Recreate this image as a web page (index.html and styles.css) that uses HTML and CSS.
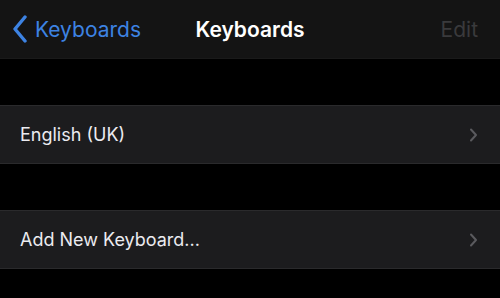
FILE: index.html
```html
<!doctype html>
<html>
    <head>
        <meta charset="UTF-8" />
        <title>Keyboards</title>
        <link rel="stylesheet" href="styles.css">
    </head>
    <body>
        <div class="navbar">
            <div class="nav-back">
                <!-- back chevron -->
                <svg class="back-icon" viewBox="0 0 16 28">
                    <path d="M13 2 L3 14 L13 26" fill="none" stroke="#3d83e3" stroke-width="3.4" stroke-linecap="round" stroke-linejoin="round" />
                </svg>
                <span>Keyboards</span>
            </div>
            <div class="nav-title">Keyboards</div>
            <div class="nav-edit">Edit</div>
        </div>

        <div class="section">
            <div class="cell">
                <span class="cell-label">English (UK)</span>
                <svg class="chevron" viewBox="0 0 9 14">
                    <path d="M2 1.5 L7 7 L2 12.5" fill="none" stroke="#5a5a5e" stroke-width="2" stroke-linecap="round" stroke-linejoin="round" />
                </svg>
            </div>
        </div>

        <div class="section">
            <div class="cell">
                <span class="cell-label">Add New Keyboard...</span>
                <svg class="chevron" viewBox="0 0 9 14">
                    <path d="M2 1.5 L7 7 L2 12.5" fill="none" stroke="#5a5a5e" stroke-width="2" stroke-linecap="round" stroke-linejoin="round" />
                </svg>
            </div>
        </div>
    </body>
</html>
```

FILE: styles.css
```css
body {
    margin: 0;
    padding: 0;
    background-color: #000000;
    font-family: "Inter", "Liberation Sans", sans-serif;
    width: 500px;
    height: 298px;
    overflow: hidden;
}

.navbar {
    height: 58px;
    background-color: #141414;
    border-bottom: 1px solid #1a1a1a;
    display: flex;
    align-items: center;
    justify-content: space-between;
    position: relative;
    padding: 0 22px 0 12px;
}

.nav-back {
    display: flex;
    align-items: center;
    color: #3d83e3;
    font-size: 21px;
}

.back-icon {
    width: 16px;
    height: 28px;
    margin-right: 7px;
}

.nav-title {
    position: absolute;
    left: 0;
    right: 0;
    text-align: center;
    color: #ffffff;
    font-size: 21px;
    font-weight: 600;
    pointer-events: none;
}

.nav-edit {
    color: #3a3a3c;
    font-size: 21px;
}

.section {
    margin-top: 46px;
    background-color: #1c1c1e;
    border-top: 1px solid #2a2a2c;
    border-bottom: 1px solid #2a2a2c;
}

.cell {
    height: 57px;
    display: flex;
    align-items: center;
    justify-content: space-between;
    padding: 0 22px 0 20px;
}

.cell-label {
    color: #ebebf0;
    font-size: 18px;
}

.chevron {
    width: 9px;
    height: 14px;
}
```
